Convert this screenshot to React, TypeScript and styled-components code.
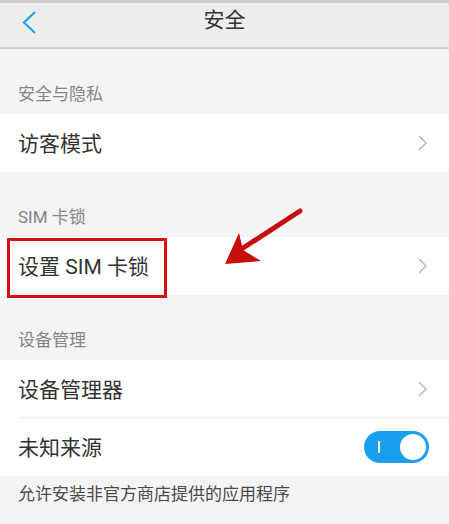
import styled, { createGlobalStyle } from "styled-components";

const GlobalStyle = createGlobalStyle`
  html, body {
    margin: 0;
    padding: 0;
    background: #f4f4f4;
    font-family: Roboto, "Noto Sans CJK SC", "Noto Sans", sans-serif;
  }
`;

const Page = styled.div`
  position: relative;
  width: 449px;
  height: 524px;
  overflow: hidden;
  background: #f4f4f4;
  border-top: 3px solid #cdcdcd;
  box-sizing: border-box;
`;

const Header = styled.div`
  position: relative;
  height: 44px;
  background: #ededed;
  border-bottom: 2px solid #d2d2d2;
  display: flex;
  align-items: center;
  justify-content: center;
`;

const Back = styled.div`
  position: absolute;
  left: 20px;
  top: 7px;
  width: 20px;
  height: 26px;
  display: flex;
`;

const Title = styled.div`
  font-size: 21px;
  color: #333;
  line-height: 1;
  margin-top: -9px;
`;

const SectionTitle = styled.div`
  height: 65px;
  box-sizing: border-box;
  padding: 0 18px 9px;
  display: flex;
  align-items: flex-end;
  font-size: 17px;
  color: #858585;
`;

const Group = styled.div`
  background: #fff;
`;

const Row = styled.div<{ $divider?: boolean }>`
  position: relative;
  height: 58px;
  display: flex;
  align-items: center;
  justify-content: space-between;
  padding: 0 20px 0 18px;
  font-size: 21px;
  color: #333;
  & > span.label {
    margin-top: -3px;
  }
  &::after {
    content: "";
    display: ${(p) => (p.$divider ? "block" : "none")};
    position: absolute;
    left: 18px;
    right: 0;
    bottom: 0;
    height: 1px;
    background: #ececec;
  }
`;

const Label = styled.span`
  margin-top: -3px;
`;

const Highlight = styled.div`
  position: absolute;
  left: 7px;
  top: 1px;
  width: 160px;
  height: 60px;
  box-sizing: border-box;
  border: 3px solid #d50f0f;
`;

const Toggle = styled.div<{ $on: boolean }>`
  position: relative;
  width: 65px;
  height: 32px;
  border-radius: 16px;
  background: ${(p) => (p.$on ? "#1a9ff0" : "#ddd")};
  display: flex;
  align-items: center;
  justify-content: ${(p) => (p.$on ? "flex-end" : "flex-start")};
  padding: 0 1px;
  box-sizing: border-box;
`;

const ToggleMark = styled.span`
  position: absolute;
  left: 14px;
  top: 10px;
  width: 2px;
  height: 12px;
  background: #fff;
`;

const Knob = styled.span`
  width: 30px;
  height: 30px;
  border-radius: 50%;
  background: #fff;
  box-sizing: border-box;
  border: 2px solid #1a9ff0;
`;

const Footer = styled.div`
  padding: 4px 18px;
  font-size: 17px;
  color: #4a4a4a;
`;

const Arrow = styled.svg`
  position: absolute;
  left: 0;
  top: 0;
  pointer-events: none;
`;

const Chevron = () => (
  <svg width="12" height="18" viewBox="0 0 12 18">
    <path d="M2 2 L9 9 L2 16" fill="none" stroke="#bcbcbc" strokeWidth="1.6" />
  </svg>
);

export default function App() {
  return (
    <Page>
      <GlobalStyle />
      <Header>
        <Back>
          <svg width="20" height="26" viewBox="0 0 20 26">
            <path d="M15 2 L4 12.5 L15 23" fill="none" stroke="#2b9fe6" strokeWidth="2.2" />
          </svg>
        </Back>
        <Title>安全</Title>
      </Header>

      <SectionTitle>安全与隐私</SectionTitle>
      <Group>
        <Row>
          <Label>访客模式</Label>
          <Chevron />
        </Row>
      </Group>

      <SectionTitle>SIM 卡锁</SectionTitle>
      <Group>
        <Row>
          <Label>设置 SIM 卡锁</Label>
          <Chevron />
          <Highlight />
        </Row>
      </Group>

      <SectionTitle>设备管理</SectionTitle>
      <Group>
        <Row $divider>
          <Label>设备管理器</Label>
          <Chevron />
        </Row>
        <Row>
          <Label>未知来源</Label>
          <Toggle $on>
            <ToggleMark />
            <Knob />
          </Toggle>
        </Row>
      </Group>
      <Footer>允许安装非官方商店提供的应用程序</Footer>

      <Arrow width="449" height="524" viewBox="0 0 449 524">
        <line x1="300" y1="208" x2="240" y2="247" stroke="#c80d0d" strokeWidth="5" strokeLinecap="round" />
        <polygon points="225,261 239,230 243,247 261,258" fill="#c80d0d" />
      </Arrow>
    </Page>
  );
}
